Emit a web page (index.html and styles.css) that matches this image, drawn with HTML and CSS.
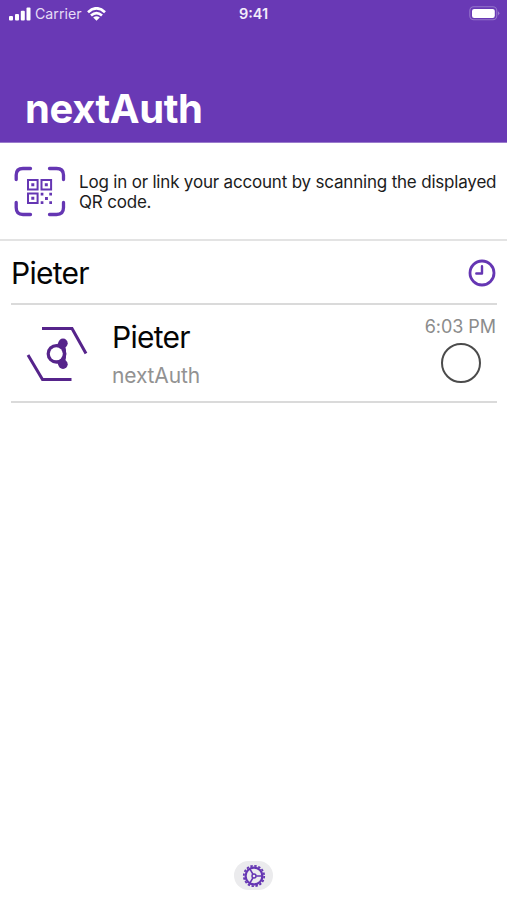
FILE: index.html
```html
<!DOCTYPE html>
<html lang="en">
<head>
<meta charset="utf-8">
<title>nextAuth</title>
<link rel="stylesheet" href="styles.css">
</head>
<body>
<div class="app">
  <header class="header">
    <div class="status">
      <div class="status-left">
        <svg class="signal" width="22" height="14" viewBox="0 0 22 14"><rect x="0" y="9" width="4" height="4.500" rx="1"/><rect x="6" y="7" width="4" height="6.500" rx="1"/><rect x="11.800" y="3.800" width="4" height="9.700" rx="1"/><rect x="17.500" y=".5" width="4" height="13" rx="1"/></svg>
        <span class="carrier">Carrier</span>
        <svg class="wifi" width="19" height="14" viewBox="0 0 19 14"><g fill="none" stroke="#fff" stroke-width="2.700"><path d="M1 5.200Q9.500-2.600 18 5.200"/><path d="M4 8.500Q9.500 3.600 15 8.500"/></g><path d="M6.200 10.600Q9.500 8 12.800 10.600L9.500 13.800Z"/></svg>
      </div>
      <span class="time">9:41</span>
      <svg class="battery" width="31" height="15" viewBox="0 0 31 15"><rect x=".8" y=".8" width="27" height="13" rx="4" fill="none" stroke="#9575cb" stroke-width="1.100"/><rect x="3" y="2.900" width="22.800" height="9" rx="2.200"/><path d="M29.200 5.200Q31.400 7.300 29.200 9.400Z" fill="#a98bd6"/></svg>
    </div>
    <h1 class="title">nextAuth</h1>
  </header>
  <section class="scan">
    <svg class="scan-icon" width="52" height="52" viewBox="0 0 52 52">
      <g fill="none" stroke="#6536b3" stroke-width="3.300" stroke-linecap="round"><path d="M2.200 13.500V9Q2.200 2.500 9 2.500H16.500M35.500 2.500H42.500Q49.500 2.500 49.500 9V13.500M49.500 36.500V41.500Q49.500 48.500 42.500 48.500H35.500M16.500 48.500H9Q2.200 48.500 2.200 41.500V36.500"/></g>
      <g fill="none" stroke="#6536b3" stroke-width="2"><path d="M14 14h9.600v9.600H14zM27.500 14h9.600v9.600h-9.600zM14 27.500h9.600v9.600H14z"/></g>
      <g fill="#6536b3"><path d="M17.300 17.300h3v3h-3zM30.800 17.300h3v3h-3zM17.300 30.800h3v3h-3zM26.700 26.700h2.700v2.700h-2.700zM35.300 26.700H38v2.700h-2.700zM31 31h2.900v2.900H31zM26.700 35.300h2.700V38h-2.700zM35.300 35.300H38V38h-2.700z"/></g>
    </svg>
    <p class="scan-text">Log in or link your account by scanning the displayed QR code.</p>
  </section>
  <main class="accounts">
    <div class="group">
      <h2 class="name">Pieter</h2>
      <svg class="clock" width="28" height="28" viewBox="0 0 28 28"><g fill="none" stroke="#6536b3"><circle cx="14" cy="14" r="12" stroke-width="2.800"/><path d="M14 7.300V14.500H8.300" stroke-width="2.400" stroke-linecap="round" stroke-linejoin="round"/></g></svg>
    </div>
    <div class="account">
      <svg class="logo" width="62" height="58" viewBox="0 0 62 58">
        <g fill="none" stroke="#56248b" stroke-width="3"><path d="M16 3.500H46L60 28.500M2 30L16.500 54.500H45.500"/></g>
        <g fill="#56248b"><circle cx="37" cy="18.200" r="4.700"/><circle cx="37" cy="39.300" r="4.700"/><circle cx="30.500" cy="28.800" r="9.900"/><path d="M33 17L30 21L30 36.500L33 40.500L39 38Q41.200 28.800 39 19.500Z"/></g>
        <circle cx="30.300" cy="28.800" r="6.500" fill="#fff"/>
      </svg>
      <div class="details">
        <span class="name">Pieter</span>
        <span class="service">nextAuth</span>
      </div>
      <div class="meta">
        <span class="stamp">6:03 PM</span>
        <span class="radio"></span>
      </div>
    </div>
  </main>
  <footer class="footer">
    <div class="settings">
      <svg width="24" height="24" viewBox="-12 -12 24 24"><g fill="none" stroke="#6536b3"><circle r="10.200" stroke-width="1.800" stroke-dasharray="2.400 1.606"/><circle r="8.400" stroke-width="2.200"/><circle r="2" stroke-width="1.500"/><path d="M2.200 0H8M-1.100-1.900L-4-6.930M-1.100 1.900L-4 6.930" stroke-width="1.600"/></g></svg>
    </div>
  </footer>
</div>
</body>
</html>
```
FILE: styles.css
```css
* { box-sizing: border-box; margin: 0; padding: 0; }
body { background: #fff; color: #050505; font-family: Inter, "Liberation Sans", sans-serif; }
svg { display: block; flex: none; }
.app { display: flex; flex-direction: column; width: 507px; height: 900px; }
.header { height: 143px; background: #6939b5; border-bottom: 1px solid #9a7bcd; color: #fff; }
.status { display: grid; grid-template-columns: 1fr auto 1fr; align-items: center; height: 27px; padding: 0 7px 0 9px; }
.status-left { display: flex; align-items: center; }
.signal, .wifi, .battery { fill: #fff; }
.carrier { margin-left: 4px; width: 52px; font-size: 14.2px; line-height: 18px; color: #e6dcf5; white-space: nowrap; }
.time { margin-left: -2px; font-size: 14.5px; font-weight: 600; line-height: 18px; color: #f3edfb; }
.battery { justify-self: end; }
.title { padding: 58px 25px 0; font-size: 40px; font-weight: 700; line-height: 48px; letter-spacing: -0.4px; }
.scan { display: flex; align-items: flex-start; height: 98px; padding: 23px 0 0 14px; border-bottom: 2px solid #e3e3e3; }
.scan-text { margin: 6px 0 0 13px; width: 424px; font-size: 17px; line-height: 20px; letter-spacing: -0.19px; color: #1c1c1c; }
.accounts { padding: 0 10px 0 11px; }
.group { display: flex; align-items: center; justify-content: space-between; height: 64px; border-bottom: 2px solid #dadada; padding: 2px 1px 0 0; }
.name { font-size: 30px; font-weight: 400; line-height: 36px; letter-spacing: -0.75px; }
.account { display: flex; height: 98px; border-bottom: 2px solid #dadada; }
.logo { margin: 20px 0 0 15px; }
.details { display: flex; flex-direction: column; margin: 14px 0 0 24px; }
.service { margin-top: 8px; font-size: 21px; line-height: 26px; letter-spacing: -0.15px; color: #929292; }
.meta { display: flex; flex-direction: column; align-items: flex-end; margin: 11px 1px 0 auto; }
.stamp { font-size: 18px; line-height: 22px; letter-spacing: -0.05px; color: #8c8c8c; }
.radio { width: 40px; height: 40px; margin: 5px 15px 0 0; border: 2px solid #4b4b4b; border-radius: 50%; }
.footer { display: flex; justify-content: center; margin-top: auto; padding-bottom: 10px; }
.settings { display: flex; align-items: center; justify-content: center; width: 39px; height: 29px; border-radius: 15px; background: #ebebed; }
```
